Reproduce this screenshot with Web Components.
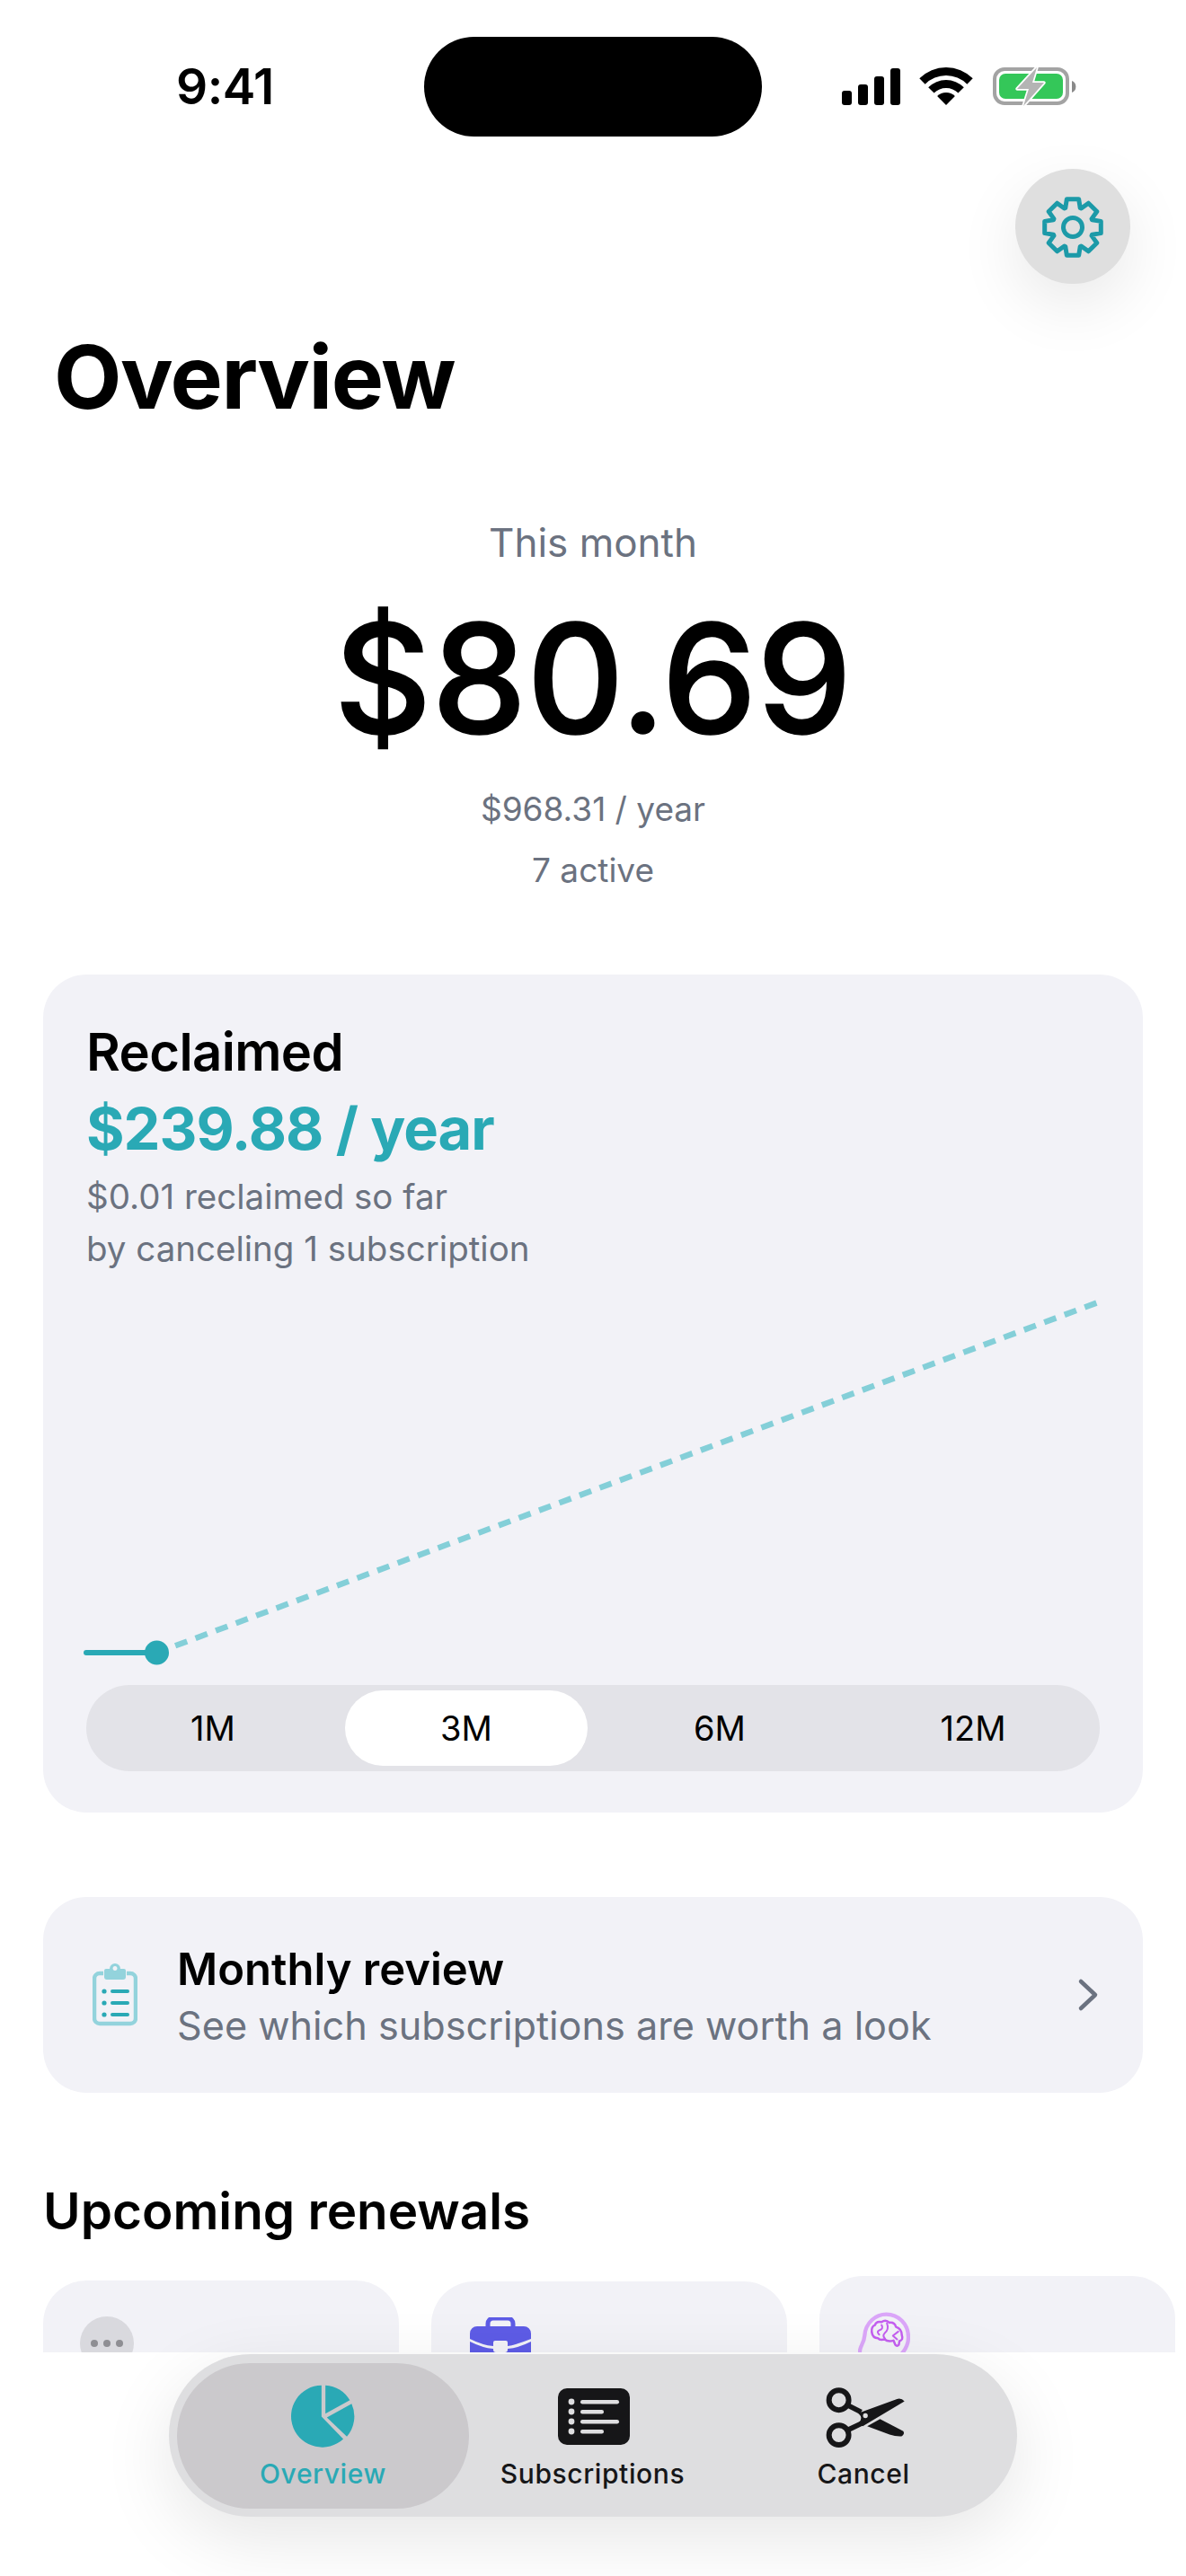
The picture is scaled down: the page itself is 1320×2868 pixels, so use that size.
<!DOCTYPE html>
<html>
<head>
<meta charset="utf-8">
<title>Overview</title>
<style>
  html, body { margin: 0; background: #fff; }
  body { font-family: Inter, "Liberation Sans", sans-serif; color: #000; }
</style>
</head>
<body>
<app-shell>
  <status-bar time="9:41"></status-bar>
  <page-header>Overview</page-header>
  <month-summary amount="$80.69" yearly="$968.31 / year" active="7 active">This month</month-summary>
  <reclaimed-card title="Reclaimed" amount="$239.88 / year">
    <span slot="line1">$0.01 reclaimed so far</span>
    <span slot="line2">by canceling 1 subscription</span>
  </reclaimed-card>
  <review-row>
    <span slot="title">Monthly review</span>
    <span slot="sub">See which subscriptions are worth a look</span>
  </review-row>
  <upcoming-renewals>Upcoming renewals</upcoming-renewals>
  <bottom-nav slot="nav"></bottom-nav>
</app-shell>

<script>
const TEAL = "#2aa9b5";

// 8 tooth gear, computed so the teeth stay even
function gearPath(cx, cy, outer, inner) {
    let d = "";
    for (let i = 0; i < 8; i++) {
        const a = i * 45;
        const pts = [[inner, a - 21], [outer, a - 12], [outer, a + 12], [inner, a + 21]];
        pts.forEach(([r, deg], j) => {
            const t = (deg - 90) * Math.PI / 180;
            const x = (cx + r * Math.cos(t)).toFixed(2);
            const y = (cy + r * Math.sin(t)).toFixed(2);
            d += (i === 0 && j === 0 ? "M" : "L") + x + " " + y + " ";
        });
    }
    return d + "Z";
}

function wifiRing(cx, cy, r1, r2) {
    const s = Math.SQRT1_2;
    const p = (r, sign) => `${(cx + sign * r * s).toFixed(2)} ${(cy - r * s).toFixed(2)}`;
    return `M${p(r2, -1)} A${r2} ${r2} 0 0 1 ${p(r2, 1)} L${p(r1, 1)} ` +
        (r1 > 0 ? `A${r1} ${r1} 0 0 0 ${p(r1, -1)} ` : "") + "Z";
}

class AppShell extends HTMLElement {
    constructor() {
        super();
        this.attachShadow({ mode: "open" });
        this.shadowRoot.innerHTML = `
            <style>
                :host { display: block; width: 1320px; height: 2868px; overflow: hidden; position: relative; background: #fff; }
                .scroll { height: 2619px; overflow: hidden; }
                .nav { display: flex; justify-content: center; position: relative; z-index: 2; padding-top: 2px; }
            </style>
            <div class="scroll"><slot></slot></div>
            <div class="nav"><slot name="nav"></slot></div>
        `;
    }
}

class StatusBar extends HTMLElement {
    constructor() {
        super();
        this.attachShadow({ mode: "open" });
        this.shadowRoot.innerHTML = `
            <style>
                :host { display: grid; grid-template-columns: 472px 376px 472px; height: 147px; padding-top: 41px; box-sizing: content-box; }
                .time { font-size: 55px; font-weight: 600; line-height: 111px; padding-left: 196px; letter-spacing: -0.5px; }
                .island { background: #000; height: 111px; border-radius: 56px; }
                .icons { display: block; margin-left: 0; }
            </style>
            <div class="time">${this.getAttribute("time")}</div>
            <div class="island"></div>
            <svg class="icons" width="472" height="111" viewBox="848 41 472 111">
                <g fill="#000">
                    <rect x="937" y="101" width="11" height="16" rx="3"/>
                    <rect x="955" y="94" width="11" height="23" rx="3"/>
                    <rect x="973" y="85" width="11" height="32" rx="3"/>
                    <rect x="991" y="76" width="11" height="41" rx="3"/>
                    <path d="${wifiRing(1053, 117, 0, 14)}"/>
                    <path d="${wifiRing(1053, 117, 19, 28)}"/>
                    <path d="${wifiRing(1053, 117, 33, 42)}"/>
                </g>
                <rect x="1107" y="77" width="81" height="38" rx="11" fill="none" stroke="#a3a3a3" stroke-width="4"/>
                <rect x="1112" y="82" width="71" height="28" rx="7" fill="#34c759"/>
                <path d="M1193 90 a7 7 0 0 1 0 13z" fill="#8a8a8a"/>
                <path d="M1154 75 L1132 99 L1145 99 L1139 118 L1162 92 L1149 92 Z" fill="#b4b4b4" stroke="#fff" stroke-width="3.5" stroke-linejoin="round" paint-order="stroke"/>
            </svg>
        `;
    }
}

class PageHeader extends HTMLElement {
    constructor() {
        super();
        this.attachShadow({ mode: "open" });
        this.shadowRoot.innerHTML = `
            <style>
                :host { display: block; padding: 0 62px 0 62px; }
                .bar { display: flex; justify-content: flex-end; padding-top: 0; }
                .gear { width: 128px; height: 128px; border-radius: 50%; background: #dfdfdf; display: flex; align-items: center; justify-content: center; box-shadow: 0 24px 70px rgba(0,0,0,.09); }
                h1 { margin: 45px 0 0 -2px; font-size: 98px; font-weight: 700; line-height: 118px; letter-spacing: -1.5px; }
            </style>
            <div class="bar">
                <div class="gear">
                    <svg width="80" height="80" viewBox="0 0 80 80" fill="none" stroke="#1c9aa8" stroke-width="5" stroke-linejoin="round">
                        <path d="${gearPath(40, 41, 32, 23)}"/>
                        <circle cx="40" cy="41" r="10.5"/>
                    </svg>
                </div>
            </div>
            <h1><slot></slot></h1>
        `;
    }
}

class MonthSummary extends HTMLElement {
    constructor() {
        super();
        this.attachShadow({ mode: "open" });
        this.shadowRoot.innerHTML = `
            <style>
                :host { display: flex; flex-direction: column; align-items: center; padding-top: 95px; color: #6b7280; }
                .label { font-size: 44px; line-height: 60px; }
                .amount { font-size: 168px; font-weight: 500; -webkit-text-stroke: 1.6px #000; line-height: 200px; color: #000; margin-top: 21px; }
                .small { font-size: 37px; line-height: 68px; }
            </style>
            <div class="label"><slot></slot></div>
            <div class="amount">${this.getAttribute("amount")}</div>
            <div class="small" style="margin-top:12px">${this.getAttribute("yearly")}</div>
            <div class="small">${this.getAttribute("active")}</div>
        `;
    }
}

class RangeTabs extends HTMLElement {
    constructor() {
        super();
        this.attachShadow({ mode: "open" });
        const selected = this.getAttribute("selected");
        const items = this.getAttribute("items").split(",");
        this.shadowRoot.innerHTML = `
            <style>
                :host { display: grid; grid-template-columns: repeat(${items.length}, 1fr); height: 96px; background: #e3e3e8; border-radius: 48px; }
                div { margin: 6px; border-radius: 42px; font-size: 38px; line-height: 84px; text-align: center; color: #000; }
                .on { background: #fff; }
            </style>
            ${items.map(i => `<div class="${i === selected ? "on" : ""}">${i}</div>`).join("")}
        `;
    }
}

class ReclaimedCard extends HTMLElement {
    constructor() {
        super();
        this.attachShadow({ mode: "open" });
        this.shadowRoot.innerHTML = `
            <style>
                :host { display: block; margin: 82px 48px 0; background: #f2f2f7; border-radius: 48px; padding: 51px 48px 44px; height: 933px; box-sizing: border-box; }
                .title { font-size: 58px; font-weight: 600; line-height: 70px; letter-spacing: -0.6px; }
                .amount { font-size: 65px; font-weight: 700; line-height: 80px; color: ${TEAL}; letter-spacing: -1px; margin-top: 11px; }
                .line { font-size: 38.5px; line-height: 58px; color: #6b7280; }
                svg { display: block; overflow: visible; margin: 0 0 16px; }
            </style>
            <div class="title">${this.getAttribute("title")}</div>
            <div class="amount">${this.getAttribute("amount")}</div>
            <div class="line" style="margin-top:6px"><slot name="line1"></slot></div>
            <div class="line"><slot name="line2"></slot></div>
            <svg width="1128" height="430" viewBox="0 0 1128 430" style="margin-top:11px">
                <path d="M78.5 410 L1126 20" stroke="#84cfd8" stroke-width="6.5" stroke-dasharray="14 10" stroke-dashoffset="-22" fill="none"/>
                <path d="M0 410 H78" stroke="${TEAL}" stroke-width="6" stroke-linecap="round"/>
                <circle cx="78.5" cy="410" r="13.5" fill="${TEAL}"/>
            </svg>
            <range-tabs items="1M,3M,6M,12M" selected="3M"></range-tabs>
        `;
    }
}

class ReviewRow extends HTMLElement {
    constructor() {
        super();
        this.attachShadow({ mode: "open" });
        this.shadowRoot.innerHTML = `
            <style>
                :host { display: flex; align-items: center; margin: 94px 48px 0; height: 218px; background: #f2f2f7; border-radius: 48px; padding: 0 48px 0 55px; box-sizing: border-box; }
                svg { flex: none; display: block; }
                .text { flex: 1; margin-left: 44px; padding-top: 4px; }
                .title { font-size: 49px; font-weight: 600; line-height: 62px; }
                .sub { font-size: 43.2px; line-height: 58px; color: #6b7280; padding-top: 2px; }
            </style>
            <svg width="50" height="72" viewBox="0 0 50 72" fill="none">
                <path d="M12 12 H8 a6 6 0 0 0 -6 6 V62 a6 6 0 0 0 6 6 H42 a6 6 0 0 0 6 -6 V18 a6 6 0 0 0 -6 -6 H38" stroke="#93d3dc" stroke-width="4.5"/>
                <path fill-rule="evenodd" d="M13 9 a2 2 0 0 1 2 -2 H19 a6 6 0 0 1 12 0 H35 a2 2 0 0 1 2 2 V16 a3 3 0 0 1 -3 3 H16 a3 3 0 0 1 -3 -3 Z M25 4 a2.5 2.5 0 1 0 0.01 0 Z" fill="#93d3dc"/>
                <g fill="${TEAL}">
                    <circle cx="13" cy="32" r="2.6"/><circle cx="13" cy="45" r="2.6"/><circle cx="13" cy="58" r="2.6"/>
                    <rect x="20" y="30" width="21" height="4" rx="2"/><rect x="20" y="43" width="21" height="4" rx="2"/><rect x="20" y="56" width="21" height="4" rx="2"/>
                </g>
            </svg>
            <div class="text">
                <div class="title"><slot name="title"></slot></div>
                <div class="sub"><slot name="sub"></slot></div>
            </div>
            <svg width="26" height="38" viewBox="0 0 26 38" fill="none" stroke="#6b7280" stroke-width="4.5" stroke-linecap="round" stroke-linejoin="round">
                <path d="M5 4 L21 19 L5 34"/>
            </svg>
        `;
    }
}

class UpcomingRenewals extends HTMLElement {
    constructor() {
        super();
        this.attachShadow({ mode: "open" });
        this.shadowRoot.innerHTML = `
            <style>
                :host { display: block; padding: 97px 0 0 48px; }
                h2 { margin: 0; font-size: 56.6px; font-weight: 600; line-height: 70px; }
                .row { display: flex; gap: 36px; margin-top: 42px; width: 1400px; }
                .card { width: 396px; height: 400px; flex: none; background: #f2f2f7; border-radius: 48px; box-sizing: border-box; padding: 40px 43px; }
                .two { margin-top: 1px; }
                .three { margin-top: -5px; }
                .dots { width: 60px; height: 60px; border-radius: 50%; background: #d9d9de; display: flex; align-items: center; justify-content: center; gap: 6px; }
                .dots i { width: 8px; height: 8px; border-radius: 50%; background: #8e8e93; }
                svg { display: block; }
            </style>
            <h2><slot></slot></h2>
            <div class="row">
                <div class="card"><div class="dots" style="margin-left:-2px"><i></i><i></i><i></i></div></div>
                <div class="card two">
                    <svg width="68" height="64" viewBox="0 0 68 64">
                        <path d="M20 12 V7 a6 6 0 0 1 6 -6 H42 a6 6 0 0 1 6 6 V12" fill="none" stroke="#5e5ce6" stroke-width="5"/>
                        <path d="M8 10 H60 a8 8 0 0 1 8 8 V24 Q50 31 42 32 V28 a2 2 0 0 0 -2 -2 H28 a2 2 0 0 0 -2 2 V32 Q14 31 0 24 V18 a8 8 0 0 1 8 -8 Z" fill="#5e5ce6"/>
                        <path d="M0 27 Q14 34 26 35 V36 a3 3 0 0 0 3 3 H39 a3 3 0 0 0 3 -3 V35 Q54 34 68 27 V64 H0 Z" fill="#5e5ce6"/>
                    </svg>
                </div>
                <div class="card three">
                    <svg viewBox="165 160 175 175" fill="none" stroke-linecap="round" stroke-linejoin="round" style="width:58px;height:58px">
                        <path d="M172 300 C165 280 185 270 187 240 C190 195 225 168 260 168 C300 168 334 200 334 245 C334 265 325 285 312 300" stroke="#dba6f9" stroke-width="13"/>
                        <path d="M211 228 Q209 208 222 204 Q226 190 244 194 Q258 184 270 196 Q288 194 292 210 Q312 216 312 238 Q318 254 304 258 L302 270 Q296 278 290 270 L284 256 Q266 262 254 252 Q238 256 232 248 Q214 248 211 228 Z" stroke="#c45ff0" stroke-width="7.5"/>
                        <path d="M244 204 Q252 216 236 222 Q226 226 236 236 M262 198 Q270 218 254 232 Q246 240 256 250 M300 226 L282 240 L296 252" stroke="#c45ff0" stroke-width="6"/>
                    </svg>
                </div>
            </div>
        `;
    }
}

class NavItem extends HTMLElement {
    constructor() {
        super();
        this.attachShadow({ mode: "open" });
        this.shadowRoot.innerHTML = `
            <style>
                :host { display: flex; flex-direction: column; align-items: center; height: 162px; border-radius: 81px; color: #161618; box-sizing: border-box; }
                :host([active]) { background: #cbc9cc; color: ${TEAL}; }
                .icon { height: 96px; display: flex; align-items: flex-end; justify-content: center; padding-bottom: 0; }
                .label { font-size: 30px; font-weight: 500; line-height: 40px; letter-spacing: .6px; margin-top: 7px; }
            </style>
            <div class="icon"><slot name="icon"></slot></div>
            <div class="label"><slot></slot></div>
        `;
    }
}

class BottomNav extends HTMLElement {
    constructor() {
        super();
        this.attachShadow({ mode: "open" });
        this.shadowRoot.innerHTML = `
            <style>
                :host { display: grid; grid-template-columns: 325px 275px 328px; width: 944px; height: 181px; box-sizing: border-box; padding: 10px 9px; background: #dedee0; border-radius: 91px; box-shadow: 0 24px 80px rgba(0,0,0,.10); }
                svg { display: block; }
            </style>
            <nav-item active>
                <svg slot="icon" width="73" height="73" viewBox="465 165 220 220" fill="${TEAL}" style="margin-left:2px">
                    <path d="M567 170 L567 275 L640 350 A104 104 0 1 1 567 170 Z"/>
                    <path d="M580 170 L580 265 L662 220 A104 104 0 0 0 580 170 Z"/>
                    <path d="M668 232 L585 278 L652 342 A104 104 0 0 0 668 232 Z"/>
                </svg>
                Overview
            </nav-item>
            <nav-item>
                <svg slot="icon" width="80" height="63" viewBox="0 0 80 63" style="margin:0 0 5px 2px">
                    <rect width="80" height="63" rx="10" fill="#161618"/>
                    <g fill="#dedee0">
                        <circle cx="15" cy="15" r="3.4"/><circle cx="15" cy="26" r="3.4"/><circle cx="15" cy="37" r="3.4"/><circle cx="15" cy="48" r="3.4"/>
                        <rect x="25" y="13" width="43" height="4.4" rx="2.2"/><rect x="25" y="24" width="26" height="4.4" rx="2.2"/>
                        <rect x="25" y="35" width="43" height="4.4" rx="2.2"/><rect x="25" y="46" width="26" height="4.4" rx="2.2"/>
                    </g>
                </svg>
                Subscriptions
            </nav-item>
            <nav-item>
                <svg slot="icon" width="93" height="72" viewBox="830 170 280 215" style="margin:0 0 -1px 4px">
                    <g fill="none" stroke="#161618">
                        <circle cx="880" cy="218" r="33" stroke-width="18"/>
                        <circle cx="880" cy="335" r="33" stroke-width="18"/>
                        <path d="M912 236 L955 258" stroke-width="17"/>
                        <path d="M912 317 L960 294" stroke-width="17"/>
                    </g>
                    <path d="M945 262 L1075 214 Q1090 210 1100 222 L960 305 L945 295 Q965 280 945 262 Z" fill="#161618"/>
                    <path d="M975 305 L1018 281 L1096 322 Q1102 332 1090 339 Q1070 340 1050 333 Z" fill="#161618"/>
                    <circle cx="969" cy="270" r="8" fill="#dedee0"/>
                </svg>
                Cancel
            </nav-item>
        `;
    }
}

customElements.define("app-shell", AppShell);
customElements.define("status-bar", StatusBar);
customElements.define("page-header", PageHeader);
customElements.define("month-summary", MonthSummary);
customElements.define("range-tabs", RangeTabs);
customElements.define("reclaimed-card", ReclaimedCard);
customElements.define("review-row", ReviewRow);
customElements.define("upcoming-renewals", UpcomingRenewals);
customElements.define("nav-item", NavItem);
customElements.define("bottom-nav", BottomNav);
</script>
</body>
</html>
